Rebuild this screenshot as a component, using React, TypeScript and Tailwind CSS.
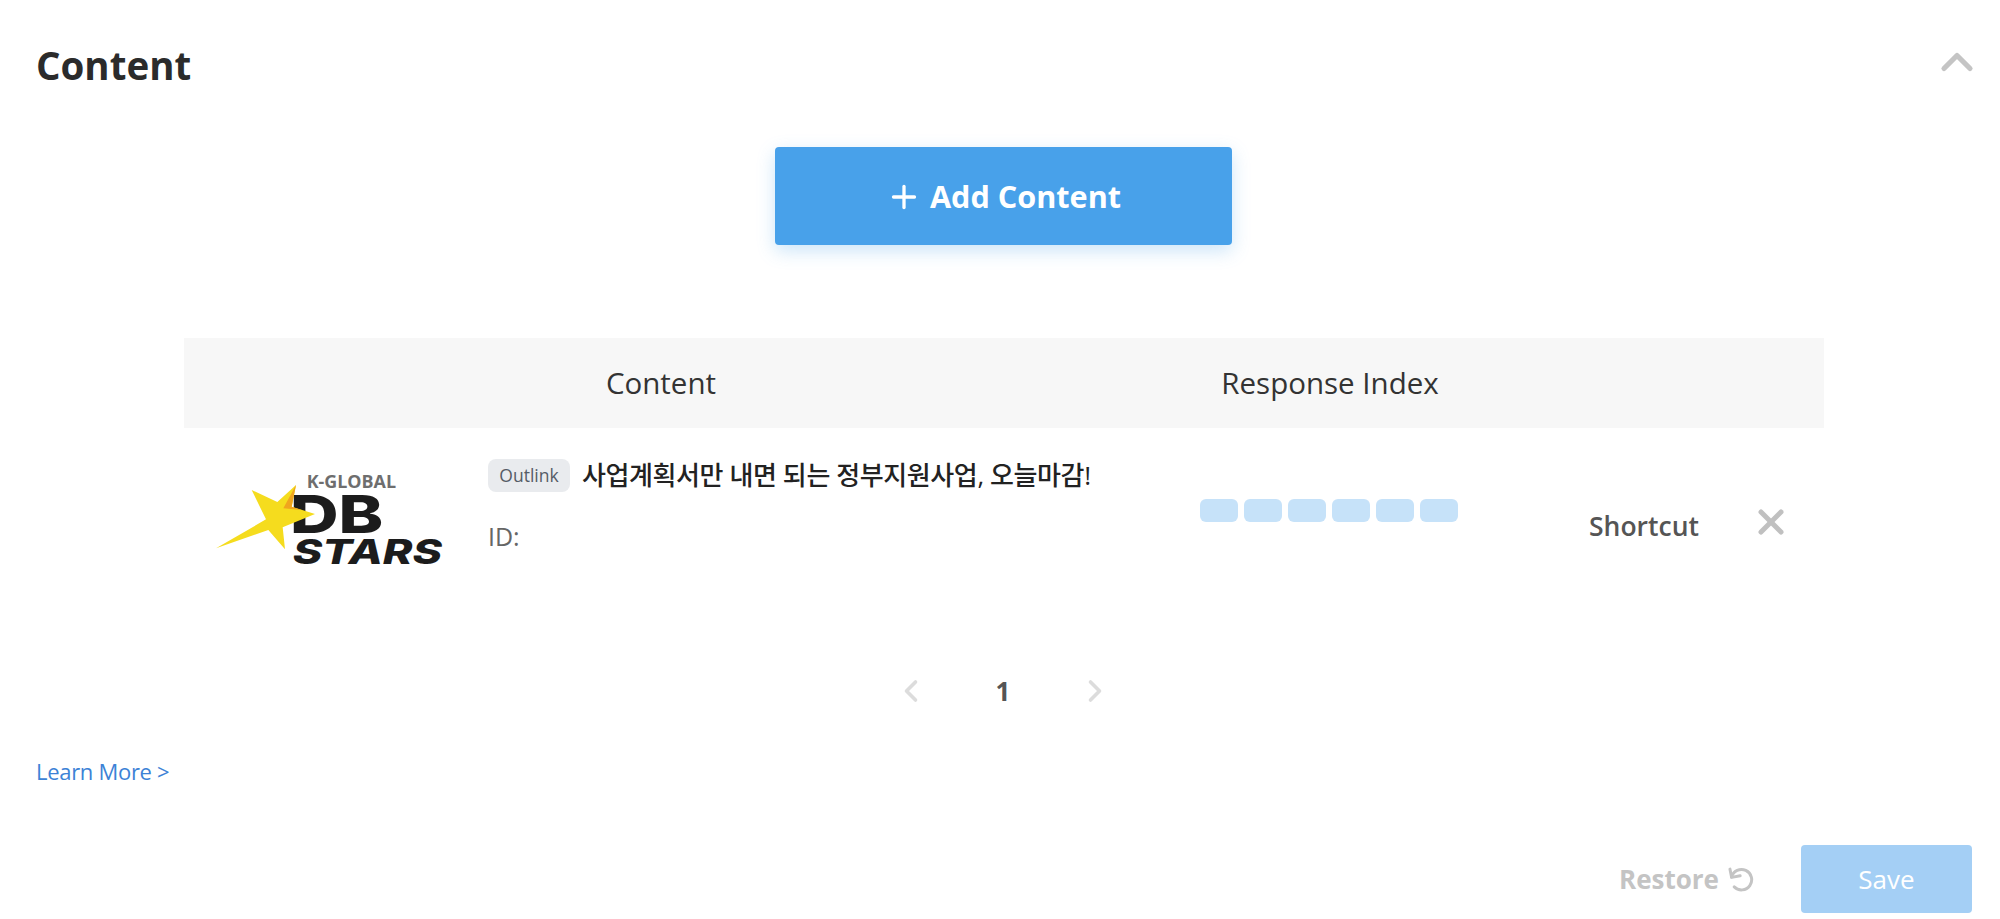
import React from "react";
import { ChevronUp, ChevronLeft, ChevronRight, Plus, X } from "lucide-react";

function Logo() {
  return (
    <svg viewBox="54 90 726 330" width="242" height="110" className="block">
      <text
        x="350"
        y="145"
        fontFamily="'Open Sans', sans-serif"
        fontWeight="700"
        fontSize="54"
        fill="#6e6e6e"
        textLength="268"
        lengthAdjust="spacingAndGlyphs"
      >
        K-GLOBAL
      </text>
      <text
        x="300"
        y="280"
        fontFamily="Inter, sans-serif"
        fontWeight="800"
        fontSize="158"
        fill="#1c1c1c"
        textLength="280"
        lengthAdjust="spacingAndGlyphs"
      >
        DB
      </text>
      <text
        x="308"
        y="372"
        fontFamily="Inter, sans-serif"
        fontWeight="800"
        fontStyle="italic"
        fontSize="103"
        fill="#1c1c1c"
        textLength="448"
        lengthAdjust="spacingAndGlyphs"
      >
        STARS
      </text>
      <polygon
        points="78,325 228,238 185,150 262,186 318,135 305,200 375,222 278,262 285,328 235,270"
        fill="#f5dc1e"
      />
      <polygon points="318,135 305,200 335,210 280,205" fill="#f0a51e" />
    </svg>
  );
}

export default function App() {
  return (
    <div className="h-[919px] w-[2000px] overflow-hidden bg-white font-['Open_Sans','Noto_Sans_CJK_KR',sans-serif]">
      <div className="flex h-[130px] items-start justify-between pl-9 pr-[17px] pt-[41px]">
        <h2 className="text-[38.5px] font-bold leading-[48px] text-[#2b2b2b]">Content</h2>
        <ChevronUp className="mt-[-5px] h-[52px] w-[52px] text-[#c4c4c4]" strokeWidth={2.4} />
      </div>

      <div className="mt-[17px] flex justify-center pl-[7px]">
        <button className="flex h-[98px] w-[457px] items-center justify-center gap-[8px] rounded-[4px] bg-[#48a1ea] pt-[1px] text-[30.6px] font-bold text-white shadow-[0_6px_18px_rgba(72,161,234,0.28)]">
          <Plus className="h-[36px] w-[36px]" strokeWidth={2.2} />
          <span>Add Content</span>
        </button>
      </div>

      <div className="ml-[184px] mt-[93px] w-[1640px]">
        <div className="flex h-[90px] items-center bg-[#f7f7f7] text-[29.5px] text-[#333333]">
          <div className="w-[954px] text-center">Content</div>
          <div className="w-[384px] text-center">Response Index</div>
        </div>

        <div className="flex h-[150px] items-start">
          <div className="w-[304px] pl-[24px] pt-[42px]">
            <Logo />
          </div>
          <div className="w-[712px] pt-[31px]">
            <div className="flex items-center gap-[12px]">
              <span className="flex h-[33px] w-[82px] items-center justify-center rounded-[8px] bg-[#e9ebee] text-[17.5px] text-[#555c66]">
                Outlink
              </span>
              <span className="text-[26px] font-medium leading-[33px] tracking-[-0.4px] text-[#222222]">
                사업계획서만 내면 되는 정부지원사업, 오늘마감!
              </span>
            </div>
            <div className="mt-[27px] text-[25px] leading-[34px] text-[#666666]">ID:</div>
          </div>
          <div className="flex w-[389px] gap-[6px] pt-[71px]">
            {[0, 1, 2, 3, 4, 5].map((i) => (
              <div key={i} className="h-[23px] w-[38px] rounded-[6px] bg-[#c6e2f9]" />
            ))}
          </div>
          <div className="w-[168px] pt-[81px] text-[26.5px] font-semibold leading-[34px] text-[#555555]">
            Shortcut
          </div>
          <X className="ml-[-6px] mt-[74px] h-[40px] w-[40px] shrink-0 text-[#c0c0c0]" strokeWidth={3} />
        </div>
      </div>

      <div className="mt-[91px] flex h-[44px] items-center justify-center pl-[6px]">
        <ChevronLeft className="h-[36px] w-[36px] text-[#dcdcdc]" strokeWidth={2.4} />
        <span className="mx-[67px] text-[26px] font-bold text-[#555555]">1</span>
        <ChevronRight className="h-[36px] w-[36px] text-[#dcdcdc]" strokeWidth={2.4} />
      </div>

      <div className="mt-[43px] pl-9 text-[22px] leading-[30px] tracking-[-0.3px] text-[#3c82d6]">Learn More &gt;</div>

      <div className="mt-[59px] flex items-center justify-end pr-[28px]">
        <div className="mr-[46px] flex items-center gap-[8px] text-[26px] font-bold text-[#c4c4c4]">
          <span>Restore</span>
          <svg
            viewBox="500 140 85 75"
            width="28"
            height="25"
            fill="none"
            stroke="currentColor"
            strokeWidth="9"
            strokeLinecap="round"
            strokeLinejoin="round"
          >
            <path d="M509 146 L514 171 L540 166" />
            <path d="M514 170 A 31 31 0 1 1 522 200" />
          </svg>
        </div>
        <button className="h-[68px] w-[171px] rounded-[4px] bg-[#a4cff5] text-[26px] text-white">Save</button>
      </div>
    </div>
  );
}
